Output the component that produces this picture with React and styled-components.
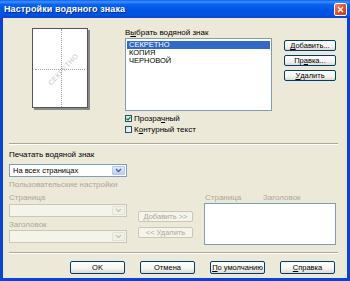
import React from "react";
import styled, { createGlobalStyle } from "styled-components";

const Global = createGlobalStyle`
  html, body { margin: 0; padding: 0; background: #ECE9D8; }
  body { font-family: "Liberation Sans", Tahoma, sans-serif; }
`;

const Window = styled.div`
  width: 350px;
  height: 281px;
  box-sizing: border-box;
  display: flex;
  flex-direction: column;
  background: #0842d6;
  padding: 0 3px 3px 3px;
  overflow: hidden;
`;

const TitleBar = styled.div`
  height: 18px;
  flex-shrink: 0;
  margin: 0 -3px;
  padding: 0 4px;
  display: flex;
  align-items: center;
  justify-content: space-between;
  background: linear-gradient(
    to bottom,
    #0a5fe8 0%,
    #3d8fff 10%,
    #0a62f0 25%,
    #0055e5 55%,
    #0052de 85%,
    #0a46cf 100%
  );
`;

const Title = styled.span`
  color: #fff;
  font-size: 9px;
  font-weight: bold;
  letter-spacing: 0.1px;
  text-shadow: 1px 1px 0 #0a2a8a;
`;

const CloseBtn = styled.div`
  width: 13px;
  height: 13px;
  margin-right: -1px;
  box-sizing: border-box;
  border: 1px solid #fff;
  border-radius: 2px;
  background: linear-gradient(135deg, #f08a6a 0%, #e0542e 45%, #c83c1a 100%);
  display: flex;
  align-items: center;
  justify-content: center;
`;

const Body = styled.div`
  flex: 1;
  background: #ECE9D8;
  display: flex;
  flex-direction: column;
  font-size: 8px;
  color: #000;
`;

const TopRow = styled.div`
  display: flex;
  padding: 10px 0 0 29px;
  height: 125px;
  flex-shrink: 0;
  box-sizing: border-box;
`;

const Page = styled.div`
  position: relative;
  width: 56px;
  height: 80px;
  box-sizing: border-box;
  border: 1px solid #555;
  background: #fff;
  box-shadow: 2px 2px 0 #8a8a8a;
  overflow: hidden;
`;

const VLine = styled.div`
  position: absolute;
  left: 28px;
  top: 0;
  bottom: 0;
  border-left: 1px dotted #a0a0a0;
`;

const HLine = styled.div`
  position: absolute;
  top: 40px;
  left: 2px;
  right: 2px;
  border-top: 1px dotted #a0a0a0;
`;

const Stamp = styled.div`
  position: absolute;
  left: 10px;
  top: 37px;
  width: 40px;
  height: 7px;
  font-size: 7px;
  line-height: 7px;
  text-align: center;
  white-space: nowrap;
  color: #c4c4c4;
  letter-spacing: 0.3px;
  transform-origin: 50% 50%;
  transform: rotate(-47deg);
`;

const ListCol = styled.div`
  margin-left: 37px;
  width: 147px;
  display: flex;
  flex-direction: column;
`;

const Label = styled.div`
  height: 10px;
  line-height: 10px;
  flex-shrink: 0;
  white-space: nowrap;
  color: ${(p) => (p.disabled ? "#ACA899" : "#000")};
`;

const ListBox = styled.div`
  height: 73px;
  flex-shrink: 0;
  box-sizing: border-box;
  border: 1px solid #7F9DB9;
  background: #fff;
  padding: 2px 1px;
`;

const Item = styled.div`
  height: 8px;
  line-height: 8px;
  font-size: 7.5px;
  padding-left: 2px;
  background: ${(p) => (p.selected ? "#316AC5" : "transparent")};
  color: ${(p) => (p.selected ? "#fff" : "#000")};
`;

const CheckRow = styled.label`
  display: flex;
  align-items: center;
  height: 11px;
  gap: 2px;
  &:first-of-type { margin-top: 2px; }
`;

const Box = styled.span`
  width: 7px;
  height: 7px;
  box-sizing: border-box;
  border: 1px solid #1C5180;
  background: linear-gradient(135deg, #dcdcd6, #fff);
  display: flex;
  align-items: center;
  justify-content: center;
`;

const ButtonCol = styled.div`
  margin-left: 12px;
  padding-top: 12px;
  display: flex;
  flex-direction: column;
  gap: 4px;
`;

const Button = styled.div`
  width: ${(p) => p.w || 52}px;
  height: ${(p) => p.h || 11}px;
  flex-shrink: 0;
  box-sizing: border-box;
  border: 1px solid ${(p) => (p.disabled ? "#C9C7BA" : "#003C74")};
  border-radius: 2px;
  background: ${(p) =>
    p.disabled ? "#F5F4EA" : "linear-gradient(to bottom, #fff 0%, #f4f4f0 60%, #dcdad0 100%)"};
  color: ${(p) => (p.disabled ? "#ACA899" : "#000")};
  font-size: 7.5px;
  display: flex;
  align-items: center;
  justify-content: center;
  white-space: nowrap;
`;

const Separator = styled.div`
  flex-shrink: 0;
  margin: ${(p) => p.m || "0"};
  margin-left: 6px;
  margin-right: 9px;
  height: 0;
  border-top: 1px solid #ACA899;
  border-bottom: 1px solid #fff;
`;

const PrintSection = styled.div`
  padding: 5px 0 0 6px;
  display: flex;
  flex-direction: column;
  flex-shrink: 0;
`;

const Select = styled.div`
  width: 118px;
  height: 13px;
  flex-shrink: 0;
  box-sizing: border-box;
  border: 1px solid ${(p) => (p.disabled ? "#C9C7BA" : "#7F9DB9")};
  background: ${(p) => (p.disabled ? "#F5F4EA" : "#fff")};
  display: flex;
  align-items: center;
  justify-content: space-between;
  padding: 1px 1px 1px 3px;
  font-size: 7.5px;
`;

const Arrow = styled.div`
  width: 13px;
  height: 100%;
  box-sizing: border-box;
  border-radius: 1px;
  border: 1px solid ${(p) => (p.disabled ? "#E3E1D6" : "#B3C8F5")};
  background: ${(p) =>
    p.disabled ? "#F2F1E8" : "linear-gradient(to bottom, #e2ebfd, #b9cdf8)"};
  display: flex;
  align-items: center;
  justify-content: center;
`;

const CustomGrid = styled.div`
  display: grid;
  grid-template-columns: 118px 55px 132px;
  column-gap: 11px;
  margin-top: 3px;
`;

const Column = styled.div`
  display: flex;
  flex-direction: column;
  gap: ${(p) => p.gap || 0}px;
  padding-top: ${(p) => p.pt || 0}px;
`;

const RightHead = styled.div`
  height: 10px;
  line-height: 10px;
  display: flex;
  color: #ACA899;
  padding-left: 1px;
  span { width: 58px; }
`;

const RightBox = styled.div`
  height: 42px;
  box-sizing: border-box;
  border: 1px solid #7F9DB9;
  background: #fff;
`;

const Footer = styled.div`
  display: flex;
  justify-content: flex-end;
  gap: 15px;
  padding: 7px 12px 0 0;
`;

const ArrowIcon = ({ color }) => (
  <svg width="7" height="5" viewBox="0 0 7 5">
    <path d="M1 1 L3.5 3.5 L6 1" fill="none" stroke={color} strokeWidth="1.3" />
  </svg>
);

export default function App() {
  return (
    <>
      <Global />
      <Window>
        <TitleBar>
          <Title>Настройки водяного знака</Title>
          <CloseBtn>
            <svg width="7" height="7" viewBox="0 0 7 7">
              <path d="M1 1 L6 6 M6 1 L1 6" stroke="#fff" strokeWidth="1.4" />
            </svg>
          </CloseBtn>
        </TitleBar>
        <Body>
          <TopRow>
            <div>
              <Page>
                <VLine />
                <HLine />
                <Stamp>СЕКРЕТНО</Stamp>
              </Page>
            </div>
            <ListCol>
              <Label>
                В<u>ы</u>брать водяной знак
              </Label>
              <ListBox>
                <Item selected>СЕКРЕТНО</Item>
                <Item>КОПИЯ</Item>
                <Item>ЧЕРНОВОЙ</Item>
              </ListBox>
              <CheckRow>
                <Box>
                  <svg width="5" height="5" viewBox="0 0 5 5">
                    <path d="M0.5 2.5 L2 4 L4.5 1" fill="none" stroke="#1f7a1f" strokeWidth="1.2" />
                  </svg>
                </Box>
                <span>
                  Прозра<u>ч</u>ный
                </span>
              </CheckRow>
              <CheckRow>
                <Box />
                <span>
                  К<u>о</u>нтурный текст
                </span>
              </CheckRow>
            </ListCol>
            <ButtonCol>
              <Button>
                <u>Д</u>обавить...
              </Button>
              <Button>
                Пр<u>а</u>вка...
              </Button>
              <Button>
                <u>У</u>далить
              </Button>
            </ButtonCol>
          </TopRow>
          <Separator />
          <PrintSection>
            <Label>Печатать водяной знак</Label>
            <Select style={{ marginTop: 4 }}>
              <span>На всех страницах</span>
              <Arrow>
                <ArrowIcon color="#4D6185" />
              </Arrow>
            </Select>
            <Label disabled style={{ marginTop: 3 }}>
              Пользовательские настройки
            </Label>
            <CustomGrid>
              <Column>
                <Label disabled>Страница</Label>
                <Select disabled style={{ marginTop: 1 }}>
                  <span />
                  <Arrow disabled>
                    <ArrowIcon color="#C9C7BA" />
                  </Arrow>
                </Select>
                <Label disabled style={{ marginTop: 3 }}>
                  Заголовок
                </Label>
                <Select disabled>
                  <span />
                  <Arrow disabled>
                    <ArrowIcon color="#C9C7BA" />
                  </Arrow>
                </Select>
              </Column>
              <Column pt={18} gap={5}>
                <Button disabled w={55}>
                  Добавить &gt;&gt;
                </Button>
                <Button disabled w={55}>
                  &lt;&lt; Удалить
                </Button>
              </Column>
              <Column>
                <RightHead>
                  <span>Страница</span>
                  <span>Заголовок</span>
                </RightHead>
                <RightBox />
              </Column>
            </CustomGrid>
          </PrintSection>
          <Separator m="7px 0 0 0" />
          <Footer>
            <Button w={55} h={13}>
              OK
            </Button>
            <Button w={55} h={13}>
              Отмена
            </Button>
            <Button w={55} h={13}>
              <u>П</u>о умолчанию
            </Button>
            <Button w={55} h={13}>
              <u>С</u>правка
            </Button>
          </Footer>
        </Body>
      </Window>
    </>
  );
}
